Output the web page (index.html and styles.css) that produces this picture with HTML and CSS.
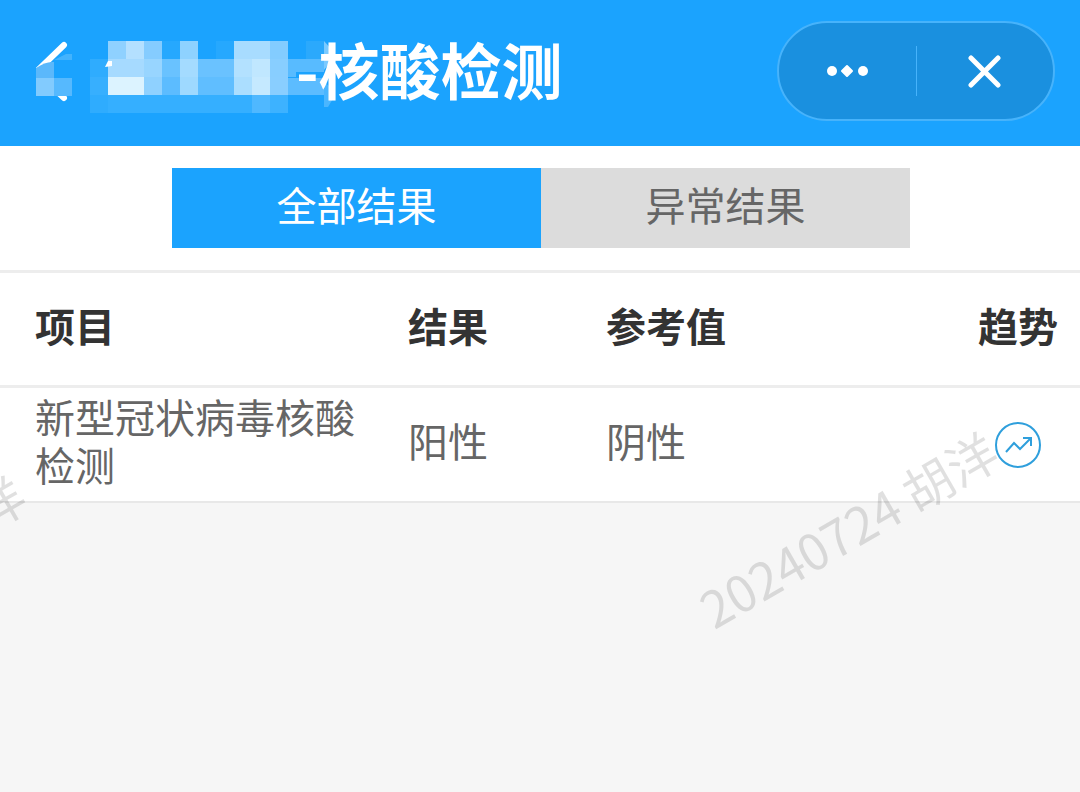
FILE: index.html
```
<!DOCTYPE html>
<html lang="zh-CN">

<head>
    <meta charset="UTF-8">
    <meta name="viewport" content="width=device-width, initial-scale=1.0">
    <title>核酸检测</title>
    <link rel="stylesheet" href="styles.css">
</head>

<body>
    <header class="navbar">
        <button type="button" class="back" aria-label="返回">
            <svg width="40" height="64" viewBox="36 38 40 64">
                <path d="M64 44L36 71L64 97" fill="none" stroke="#fff" stroke-width="6" stroke-linecap="round" />
                <path d="M36 67Q46 60 54 61V77H36Z" fill="#5bb8fb" />
                <path d="M54 60L66 52L72 53V95H54Z" fill="#1ba3fe" />
                <path d="M54 59L66 53H72V59Z" fill="#43b3fd" />
                <path d="M36 77H54V95H36Z" fill="#82cbfe" />
                <path d="M54 77H72V95H54Z" fill="#56b9fe" />
            </svg>
        </button>
        <!-- Mosaic over the patient name -->
        <svg class="mosaic" width="260" height="80" viewBox="88 38 260 80" aria-hidden="true">
            <g shape-rendering="crispEdges">
                <path d="M90 59H108V113H90Z" fill="#2facfe" />
                <path d="M90 77H108V95H90Z" fill="#37affe" />
                <path d="M108 41H126V59H108Z" fill="#8fd1ff" />
                <path d="M126 41H144V59H126Z" fill="#b4e0ff" />
                <path d="M144 41H162V59H144Z" fill="#85ccff" />
                <path d="M162 41H180V59H162Z" fill="#26a8fe" />
                <path d="M180 41H198V59H180Z" fill="#8ed2ff" />
                <path d="M216 41H234V59H216Z" fill="#26a8fe" />
                <path d="M234 41H270V59H234Z" fill="#a8dcff" />
                <path d="M270 41H288V59H270Z" fill="#83ccff" />
                <path d="M306 41H324V59H306Z" fill="#2ba9fc" />
                <path d="M108 59H144V77H108Z" fill="#a6daff" />
                <path d="M144 59H162V77H144Z" fill="#98d5ff" />
                <path d="M162 59H180V77H162Z" fill="#69c2ff" />
                <path d="M180 59H198V77H180Z" fill="#a4dbff" />
                <path d="M198 59H234V77H198Z" fill="#6ac2ff" />
                <path d="M234 59H252V77H234Z" fill="#b3e1ff" />
                <path d="M252 59H270V77H252Z" fill="#c0e7ff" />
                <path d="M270 59H288V77H270Z" fill="#88ceff" />
                <path d="M288 59H324V72H288Z" fill="#58bbff" />
                <path d="M288 72H296V77H288Z" fill="#58bbff" />
                <path d="M108 77H144V95H108Z" fill="#dcf3ff" />
                <path d="M144 77H162V95H144Z" fill="#8fd1ff" />
                <path d="M162 77H180V95H162Z" fill="#5cbcff" />
                <path d="M180 77H198V95H180Z" fill="#9ed9ff" />
                <path d="M198 77H234V95H198Z" fill="#60beff" />
                <path d="M234 77H252V95H234Z" fill="#abdeff" />
                <path d="M252 77H270V95H252Z" fill="#c5e9ff" />
                <path d="M270 77H288V95H270Z" fill="#89ceff" />
                <path d="M288 78H324V95H288Z" fill="#5cbcff" />
                <path d="M108 95H252V113H108Z" fill="#35afff" />
                <path d="M252 95H270V113H252Z" fill="#4fb8ff" />
                <path d="M270 95H288V113H270Z" fill="#3db2ff" />
            </g>
            <path d="M324 41L332 50V60L324 70Z" fill="#7bcaff" />
            <path d="M324 82L334 90V97L328 107H324Z" fill="#4ab6ff" />
            <path d="M105 67L108 61H112V66Z" fill="#fff" />
        </svg>
        <h1 class="title">-核酸检测</h1>
        <div class="capsule">
            <button type="button" class="capsule-btn" aria-label="更多">
                <svg width="44" height="16" viewBox="0 0 44 16" fill="#fff">
                    <circle cx="7" cy="8" r="5" />
                    <path d="M22 3L27 8L22 13L17 8Z" stroke="#fff" stroke-width="2" stroke-linejoin="round" />
                    <circle cx="38" cy="8" r="5" />
                </svg>
            </button>
            <span class="divider"></span>
            <button type="button" class="capsule-btn" aria-label="关闭">
                <svg width="34" height="34" viewBox="0 0 34 34" fill="none" stroke="#fff" stroke-width="5" stroke-linecap="round">
                    <path d="M3 4L30 31M30 4L3 31" />
                </svg>
            </button>
        </div>
    </header>

    <main>
        <div class="tabs">
            <button type="button" class="tab active">全部结果</button>
            <button type="button" class="tab">异常结果</button>
        </div>

        <table class="results">
            <thead>
                <tr>
                    <th class="col-item">项目</th>
                    <th class="col-result">结果</th>
                    <th>参考值</th>
                    <th class="col-trend">趋势</th>
                </tr>
            </thead>
            <tbody>
                <tr>
                    <td class="col-item">新型冠状病毒核酸检测</td>
                    <td class="col-result">阳性</td>
                    <td>阴性</td>
                    <td class="col-trend">
                        <button type="button" class="trend" aria-label="查看趋势">
                            <svg width="46" height="46" viewBox="0 0 46 46" fill="none" stroke="#2f9fdc" stroke-width="2">
                                <circle cx="23" cy="23" r="22" />
                                <path d="M11 30L19 21L25 27L35 17" />
                                <path d="M28 16H36V24" />
                            </svg>
                        </button>
                    </td>
                </tr>
            </tbody>
        </table>
    </main>

    <!-- Watermarks -->
    <div class="watermarks" aria-hidden="true">
        <span class="watermark watermark-left">20240724 胡洋</span>
        <span class="watermark watermark-right">20240724 胡洋</span>
    </div>
</body>

</html>
```
FILE: styles.css
```
* {
    box-sizing: border-box;
}

body {
    font-family: "Noto Sans CJK SC", sans-serif;
    margin: 0;
    min-height: 100vh;
    position: relative;
    background-color: #f6f6f6;
    color: #666;
    font-size: 40px;
    line-height: 48px;
}

button {
    font: inherit;
    color: inherit;
    border: none;
    padding: 0;
    background: none;
    cursor: pointer;
}

svg {
    display: block;
}

.navbar {
    position: relative;
    display: flex;
    align-items: center;
    height: 146px;
    padding: 0 25px 4px 36px;
    background-color: #1ba3fe;
}

.title {
    z-index: 1;
    margin: 0 auto 0 220px;
    padding-bottom: 4px;
    color: #fff;
    font-size: 61px;
    line-height: 72px;
    font-weight: bold;
}

.mosaic {
    position: absolute;
    left: 88px;
    top: 38px;
}

.capsule {
    display: flex;
    align-items: center;
    width: 278px;
    height: 100px;
    border: 2px solid #47b3fb;
    border-radius: 50px;
    background-color: #1a90df;
}

.capsule-btn {
    flex: 1;
    display: flex;
    justify-content: center;
    align-items: center;
    height: 100%;
}

.divider {
    width: 1px;
    height: 50px;
    background-color: #47b3fb;
}

.tabs {
    display: flex;
    justify-content: center;
    padding: 22px 170px 22px 172px;
    background-color: #fff;
}

.tab {
    flex: 1;
    height: 80px;
    padding-bottom: 8px;
    background-color: #dcdcdc;
}

.tab.active {
    background-color: #1ba3fe;
    color: #fff;
}

.results {
    width: 100%;
    border-collapse: separate;
    border-spacing: 0;
    table-layout: fixed;
    background-color: #fff;
    border-bottom: 2px solid #e8e8e8;
}

.results th,
.results td {
    padding: 4px 0 13px;
    text-align: left;
    vertical-align: middle;
}

.results th {
    height: 118px;
    color: #333;
    font-weight: bold;
    border-top: 3px solid #ededed;
    border-bottom: 3px solid #ededed;
}

.results .col-item {
    width: 408px;
    padding-left: 35px;
    padding-right: 40px;
}

.results .col-result {
    width: 198px;
}

.results .col-trend {
    width: 124px;
    padding-left: 22px;
    padding-right: 22px;
    text-align: center;
}

.results td.col-trend {
    padding-top: 8px;
    padding-bottom: 8px;
}

.trend {
    display: block;
    margin: 0 auto;
}

.watermarks {
    position: absolute;
    inset: 0;
    overflow: hidden;
    pointer-events: none;
}

.watermark {
    position: absolute;
    color: rgba(0, 0, 0, 0.12);
    font-size: 50px;
    line-height: 60px;
    white-space: nowrap;
    transform: rotate(-30deg);
}

.watermark-right {
    left: 681px;
    top: 498px;
}

.watermark-left {
    left: -291px;
    top: 542px;
}
```
